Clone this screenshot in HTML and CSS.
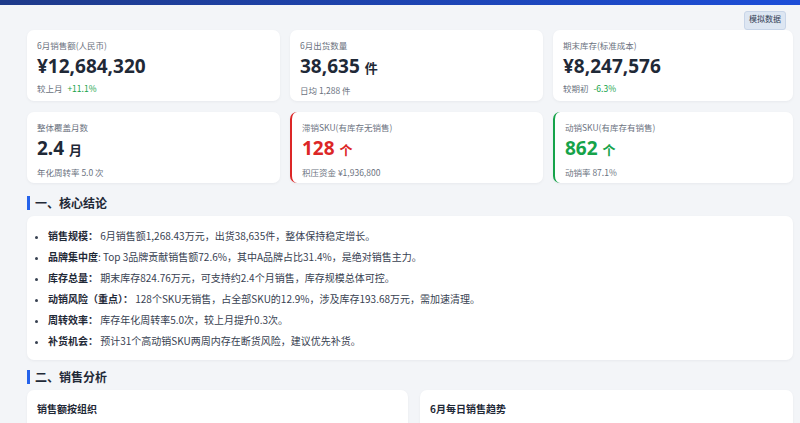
FILE: index.html
```html
<!DOCTYPE html>
<html lang="zh-CN">
<head>
    <meta charset="UTF-8">
    <meta name="viewport" content="width=device-width, initial-scale=1.0">
    <title>6月销售与库存报告</title>
    <link rel="stylesheet" href="styles.css">
</head>
<body>
    <div class="top-bar"></div>
    <div class="page">
        <div class="badge-row">
            <span class="badge">模拟数据</span>
        </div>

        <div class="kpi-grid">
            <div class="kpi">
                <div class="kpi-label">6月销售额(人民币)</div>
                <div class="kpi-value">¥12,684,320</div>
                <div class="kpi-sub">较上月 <span class="up">+11.1%</span></div>
            </div>
            <div class="kpi">
                <div class="kpi-label">6月出货数量</div>
                <div class="kpi-value">38,635 <span class="unit">件</span></div>
                <div class="kpi-sub">日均 1,288 件</div>
            </div>
            <div class="kpi">
                <div class="kpi-label">期末库存(标准成本)</div>
                <div class="kpi-value">¥8,247,576</div>
                <div class="kpi-sub">较期初 <span class="up">-6.3%</span></div>
            </div>
            <div class="kpi">
                <div class="kpi-label">整体覆盖月数</div>
                <div class="kpi-value">2.4 <span class="unit">月</span></div>
                <div class="kpi-sub">年化周转率 5.0 次</div>
            </div>
            <div class="kpi kpi-danger">
                <div class="kpi-label">滞销SKU(有库存无销售)</div>
                <div class="kpi-value">128 <span class="unit">个</span></div>
                <div class="kpi-sub">积压资金 ¥1,936,800</div>
            </div>
            <div class="kpi kpi-good">
                <div class="kpi-label">动销SKU(有库存有销售)</div>
                <div class="kpi-value">862 <span class="unit">个</span></div>
                <div class="kpi-sub">动销率 87.1%</div>
            </div>
        </div>

        <h2 class="section-title">一、核心结论</h2>
        <div class="panel">
            <ul class="conclusions">
                <li><b>销售规模：</b> 6月销售额1,268.43万元，出货38,635件，整体保持稳定增长。</li>
                <li><b>品牌集中度</b>: Top 3品牌贡献销售额72.6%，其中A品牌占比31.4%，是绝对销售主力。</li>
                <li><b>库存总量：</b> 期末库存824.76万元，可支持约2.4个月销售，库存规模总体可控。</li>
                <li><b>动销风险（重点）：</b> 128个SKU无销售，占全部SKU的12.9%，涉及库存193.68万元，需加速清理。</li>
                <li><b>周转效率：</b> 库存年化周转率5.0次，较上月提升0.3次。</li>
                <li><b>补货机会：</b> 预计31个高动销SKU两周内存在断货风险，建议优先补货。</li>
            </ul>
        </div>

        <h2 class="section-title">二、销售分析</h2>
        <div class="chart-grid">
            <div class="panel chart">
                <div class="chart-title">销售额按组织</div>
            </div>
            <div class="panel chart">
                <div class="chart-title">6月每日销售趋势</div>
            </div>
        </div>
    </div>
</body>
</html>
```

FILE: styles.css
```css
body {
    margin: 0;
    background: #f3f5f8;
    font-family: "Noto Sans CJK SC", "Noto Sans", sans-serif;
    color: #1f2937;
}
.top-bar {
    height: 5px;
    background: linear-gradient(to right, #1e3a8a, #1d4ed8);
}
.page {
    padding: 0 7px 0 27px;
}
.badge-row {
    display: flex;
    justify-content: flex-end;
    padding: 6px 7px 0 0;
    height: 19px;
}
.badge {
    font-size: 8px;
    line-height: 11px;
    padding: 1px 4px;
    background: #dde6f2;
    border: 1px solid #c8d5e8;
    border-radius: 3px;
    color: #334155;
}
.kpi-grid {
    display: grid;
    grid-template-columns: 253px 253px 1fr;
    gap: 11px 10px;
    margin-bottom: 13px;
}
.kpi {
    background: #fff;
    border-radius: 7px;
    box-shadow: 0 1px 3px rgba(15, 23, 42, 0.05);
    padding: 9px 10px 8px;
    height: 54px;
}
.kpi-label {
    font-size: 8.5px;
    color: #6b7280;
    line-height: 12px;
}
.kpi-value {
    font-family: "Noto Sans", "Noto Sans CJK SC", sans-serif;
    font-size: 19px;
    font-weight: 700;
    line-height: 28px;
    margin-top: 1px;
}
.kpi-value .unit {
    font-size: 13px;
}
.kpi-sub {
    font-size: 8.5px;
    color: #6b7280;
    line-height: 12px;
    margin-top: 2px;
}
.up {
    color: #16a34a;
    margin-left: 3px;
}
.kpi-danger {
    border-left: 2px solid #dc2626;
}
.kpi-danger .kpi-value {
    color: #dc2626;
}
.kpi-good {
    border-left: 2px solid #16a34a;
}
.kpi-good .kpi-value {
    color: #16a34a;
}
.section-title {
    font-size: 12px;
    font-weight: 700;
    margin: 10px 0 6px;
    padding-left: 5px;
    border-left: 3px solid #2563eb;
    line-height: 14px;
}
.panel {
    background: #fff;
    border-radius: 7px;
    box-shadow: 0 1px 3px rgba(15, 23, 42, 0.05);
}
.conclusions {
    margin: 0;
    padding: 9px 10px 9px 21px;
    font-size: 10px;
    line-height: 21px;
    color: #374151;
}
.conclusions li::marker {
    font-size: 9px;
}
.conclusions b {
    color: #1f2937;
}
.chart-grid {
    display: grid;
    grid-template-columns: 381px 1fr;
    gap: 12px;
}
.chart {
    height: 60px;
    padding: 11px 10px 10px;
}
.chart-title {
    font-size: 10px;
    font-weight: 700;
    line-height: 15px;
}
```
